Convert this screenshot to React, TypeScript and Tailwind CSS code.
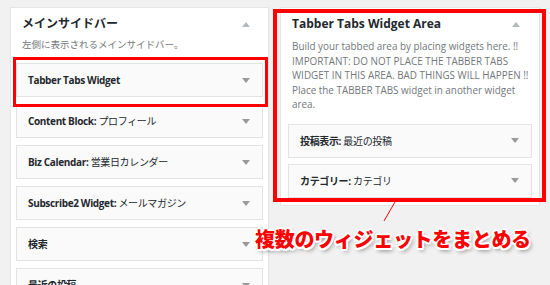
import React from 'react';

const FONT = '"Open Sans", "Noto Sans CJK JP", sans-serif';

function TriangleDown() {
  return (
    <svg width="8" height="5" viewBox="0 0 8 5" className="shrink-0">
      <path d="M0 0h8L4 5z" fill="#9a9a9a" />
    </svg>
  );
}

function TriangleUp() {
  return (
    <svg width="8" height="5" viewBox="0 0 8 5" className="shrink-0">
      <path d="M0 5h8L4 0z" fill="#b4b9be" />
    </svg>
  );
}

function Widget({ title, sub }: { title: string; sub?: string }) {
  return (
    <div className="flex h-[34px] items-center justify-between border border-[#e3e3e3] bg-[#fafafa] pl-[11px] pr-[12px]">
      <span className="text-[10px] font-bold leading-none tracking-[-0.35px] text-[#23282d]">
        {title}
        {sub && <span className="font-normal">{sub}</span>}
      </span>
      <TriangleDown />
    </div>
  );
}

const LEFT_WIDGETS = [
  { title: 'Tabber Tabs Widget' },
  { title: 'Content Block: ', sub: 'プロフィール' },
  { title: 'Biz Calendar: ', sub: '営業日カレンダー' },
  { title: 'Subscribe2 Widget: ', sub: 'メールマガジン' },
  { title: '検索' },
  { title: '最近の投稿' },
];

export default function App() {
  return (
    <div
      className="relative flex h-[285px] w-[550px] items-start overflow-hidden bg-[#f1f1f1] pl-[10px] pt-[7px]"
      style={{ fontFamily: FONT }}
    >
      {/* メインサイドバー */}
      <div className="w-[259px] shrink-0 border border-[#e5e5e5] bg-white px-[5px] pb-[8px]">
        <div className="flex items-center justify-between pl-[6px] pr-[13px] pt-[8px]">
          <h3 className="text-[12px] font-bold leading-[16px] text-[#23282d]">メインサイドバー</h3>
          <TriangleUp />
        </div>
        <p className="mt-[6px] pl-[6px] text-[9.5px] leading-[14px] text-[#72777c]">
          左側に表示されるメインサイドバー。
        </p>
        <div className="mt-[11px] flex flex-col gap-[7px]">
          {LEFT_WIDGETS.map((w) => (
            <Widget key={w.title} title={w.title} sub={w.sub} />
          ))}
        </div>
      </div>

      {/* Tabber Tabs Widget Area */}
      <div className="ml-[11px] w-[260px] shrink-0 border border-[#e5e5e5] bg-white px-[7px] pb-[7px]">
        <div className="flex items-center justify-between pl-[4px] pr-[12px] pt-[8px]">
          <h3 className="text-[12px] font-bold leading-[16px] text-[#23282d]">Tabber Tabs Widget Area</h3>
          <TriangleUp />
        </div>
        <p className="mt-[7px] pl-[4px] text-[9.9px] leading-[14.5px] text-[#72777c]">
          Build your tabbed area by placing widgets here. !!
          <br />
          IMPORTANT: DO NOT PLACE THE TABBER TABS
          <br />
          WIDGET IN THIS AREA. BAD THINGS WILL HAPPEN !!
          <br />
          Place the TABBER TABS widget in another widget
          <br />
          area.
        </p>
        <div className="mt-[12px] flex flex-col gap-[6px]">
          <Widget title="投稿表示: " sub="最近の投稿" />
          <Widget title="カテゴリー: " sub="カテゴリ" />
        </div>
      </div>

      {/* annotation frames */}
      <div className="absolute left-[13px] top-[57px] h-[50px] w-[255px] border-[3px] border-[#ff0000]" />
      <div className="absolute left-[273px] top-[9px] h-[193px] w-[273px] border-[4px] border-[#ff0000]" />

      <svg className="absolute left-0 top-0" width="550" height="285">
        <line x1="395" y1="202" x2="384" y2="221" stroke="#ff0000" strokeWidth="1" />
      </svg>

      <div
        className="absolute left-[255px] top-[226px] text-[20px] font-black leading-[26px] tracking-[-0.3px] text-[#ff0000] [text-shadow:2px_0_#fff,-2px_0_#fff,0_2px_#fff,0_-2px_#fff,1.5px_1.5px_#fff,-1.5px_-1.5px_#fff,1.5px_-1.5px_#fff,-1.5px_1.5px_#fff,2px_3px_4px_rgba(0,0,0,0.45)]"
        style={{ fontFamily: '"Noto Sans CJK JP", sans-serif' }}
      >
        複数のウィジェットをまとめる
      </div>
    </div>
  );
}
